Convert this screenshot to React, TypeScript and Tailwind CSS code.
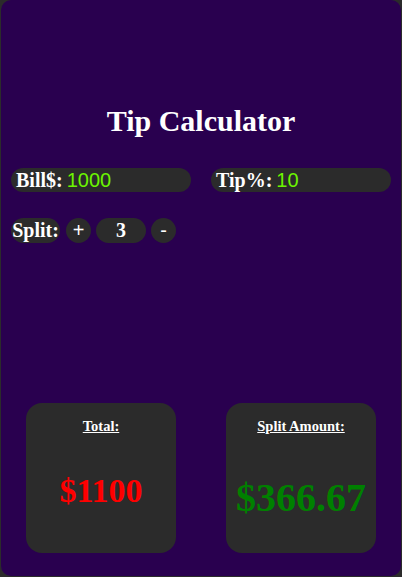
import React from "react";

const serif = { fontFamily: '"Liberation Serif", "Times New Roman", serif' };
const sans = { fontFamily: '"Liberation Sans", Arial, sans-serif' };

function Field({ label, value }: { label: string; value: string }) {
  return (
    <div className="flex items-center h-[24px] w-[180px] rounded-full bg-[#2b2b2b] pl-[5px]">
      <span className="text-white font-bold text-[20px] leading-[24px]" style={serif}>
        {label}
      </span>
      <span className="ml-[4px] text-[#6cf500] text-[20px] leading-[24px]" style={sans}>
        {value}
      </span>
    </div>
  );
}

export default function App() {
  return (
    <div className="w-[402px] h-[577px] bg-[#2b2b2b] pl-[1px]">
      <div className="w-[400px] h-[576px] rounded-[10px] bg-[#29004f] flex flex-col">
        <h1
          className="mt-[106px] text-center text-white font-bold text-[30px] leading-[30px]"
          style={serif}
        >
          Tip Calculator
        </h1>
        <div className="mt-[32px] flex">
          <div className="w-1/2 flex justify-center">
            <Field label="Bill$:" value="1000" />
          </div>
          <div className="w-1/2 flex justify-center">
            <Field label="Tip%:" value="10" />
          </div>
        </div>
        <div className="mt-[26px] ml-[10px] flex items-center gap-[5px] text-white font-bold text-[20px]" style={serif}>
          <div className="h-[25px] w-[49px] rounded-full bg-[#2b2b2b] flex items-center justify-center leading-[25px]">
            Split:
          </div>
          <div className="ml-[1px] h-[25px] w-[25px] rounded-full bg-[#2b2b2b] flex items-center justify-center leading-[25px] font-normal" style={sans}>
            +
          </div>
          <div className="h-[25px] w-[50px] rounded-full bg-[#2b2b2b] flex items-center justify-center leading-[25px]">
            3
          </div>
          <div className="h-[25px] w-[25px] rounded-full bg-[#2b2b2b] flex items-center justify-center leading-[25px] font-normal" style={sans}>
            -
          </div>
        </div>
        <div className="mt-[160px] flex">
          <div className="w-1/2 flex justify-center">
            <div className="w-[150px] h-[150px] rounded-[16px] bg-[#2b2b2b] flex flex-col items-center" style={serif}>
              <div className="mt-[14px] text-white font-bold text-[14.5px] leading-[18px] underline">Total:</div>
              <div className="mt-[36px] text-[#ff0000] font-bold text-[34px] leading-[40px]">$1100</div>
            </div>
          </div>
          <div className="w-1/2 flex justify-center">
            <div className="w-[150px] h-[150px] rounded-[16px] bg-[#2b2b2b] flex flex-col items-center" style={serif}>
              <div className="mt-[14px] text-white font-bold text-[14.5px] leading-[18px] underline">Split Amount:</div>
              <div className="mt-[40px] text-[#008000] font-bold text-[40px] leading-[46px]">$366.67</div>
            </div>
          </div>
        </div>
      </div>
    </div>
  );
}
